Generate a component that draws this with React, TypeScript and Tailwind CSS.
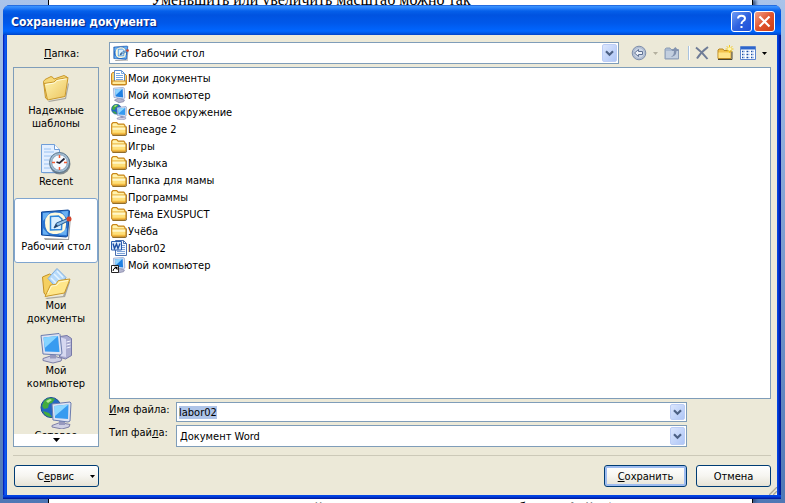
import { useEffect, useRef } from "react";
import type { ReactNode } from "react";

function Folder() {
  return (
    <svg width="16" height="16" viewBox="0 0 16 16" aria-hidden="true">
      <path d="M1.500 14.500h13l1.300-1V5.500" fill="none" stroke="#5d5438" strokeWidth="1" />
      <path
        d="M.7 12.500V3L2 1.600h3.700L7.200 3.200h5.600l1.100 1.200v.9l1.100.9v6.300L13.800 13.800H2z"
        fill="#ffe07a"
        stroke="#c8861a"
        strokeWidth="1.200"
      />
      <path d="M1.700 4V3.200l.7-.6h3l1.400 1.600h5.600l.5.500v.6h-11z" fill="#fff3b0" />
      <path d="M1.400 6h12.800" stroke="#dca53a" strokeWidth=".8" />
      <path d="M1.500 6.600h12.700v2.200H1.500z" fill="#fff7c8" />
      <path d="M1.700 11.700h12.400v1.200H2z" fill="#f3bb42" />
    </svg>
  );
}

function BigFolder() {
  return (
    <svg width="32" height="32" viewBox="0 0 32 32" aria-hidden="true">
      <defs>
        <linearGradient id="bf" x1="0" y1="0" x2="1" y2="1">
          <stop offset="0" stopColor="#fff6b4" />
          <stop offset="1" stopColor="#ecc35c" />
        </linearGradient>
      </defs>
      <path d="M8 29l17-3 3-15 1 1-3 15-17 3z" fill="#666" opacity=".5" />
      <path d="M3.500 9.500l1.500-2 6-3 2 1 1 1.500 10-3.500 3 1.500v4L7 27l-1.500-1z" fill="#f6d877" stroke="#c9982c" />
      <path d="M4 11.500l10-1.500 2.500-2.500L28 5.500 25 24.500 7.500 28z" fill="url(#bf)" stroke="#c9982c" />
      <path d="M5.500 12.500l9-1.500 2.500-2.500 9.500-1.700" fill="none" stroke="#fffbe0" />
    </svg>
  );
}

function BigRecent() {
  return (
    <svg width="32" height="32" viewBox="0 0 32 32" aria-hidden="true">
      <path d="M3 30.500h17V8l-4-5" fill="#8b9bb0" opacity=".5" />
      <path d="M1.500 1.500h13l5 5v23h-18z" fill="#e3efff" stroke="#6f9ed8" />
      <path d="M14.500 1.500v5h5" fill="#fff" stroke="#6f9ed8" />
      <path d="M4 6h7M4 9h10M4 13h8M4 17h5M4 21h5M4 25h6" stroke="#99c2f2" />
      <circle cx="20" cy="21" r="10.500" fill="#485868" opacity=".65" />
      <circle cx="19.500" cy="19.500" r="10" fill="#a9c0d4" stroke="#55738c" />
      <circle cx="19.500" cy="19.500" r="7.800" fill="#f7fbff" stroke="#86a4bd" />
      <path d="M19.500 12v3m0 9v3M12 19.500h3m9 0h3" stroke="#f05a33" strokeWidth="1.500" />
      <path d="M24.500 15.500l-5 4.500-3-1" fill="none" stroke="#223" strokeWidth="1.700" />
    </svg>
  );
}

function Desktop({ size = 32 }: { size?: number }) {
  return (
    <svg width={size} height={size} viewBox="0 0 32 32" aria-hidden="true">
      <path d="M4 30l24 1 2-23 1 1-2 23H5z" fill="#444" opacity=".5" />
      <path d="M1.500 4l27-2 1 1-2 25-1 1-25-2z" fill="#2a74d0" stroke="#0f4797" />
      <path d="M3 5l7-.5L3 13zM21 3.500l7-.5-.5 8zM3 20l6 7-6-.5zM27 20l-.5 7-8-.5z" fill="#69b0f2" />
      <path d="M5 15q0-10 10-10.500l5 .5q6 2 6 9v3q0 8-9 9h-4q-8-1-8-11z" fill="#fffadd" />
      <path d="M10.500 8.500l8-.5 3.500 3-.5 10.500-11 .5z" fill="#d9efff" stroke="#2d86dc" strokeWidth="1.500" />
      <path d="M14 20l2.500-5 11-4.500 1.500 2-10 5z" fill="#8bbde8" stroke="#245a91" />
      <path d="M14 20l2-4 2 2z" fill="#253e60" />
      <circle cx="29" cy="11" r="2.500" fill="#d6432a" />
    </svg>
  );
}

function BigDocs() {
  return (
    <svg width="32" height="32" viewBox="0 0 32 32" aria-hidden="true">
      <path d="M5 31l18-2 6-15 1 1-5 15-18 2z" fill="#666" opacity=".5" />
      <path d="M2.500 10l7-3 3 2 9-1 4 3v13l-19 5-2.500-3z" fill="#f5cf60" stroke="#c49325" />
      <path d="M17 1.500l9 9-9 11-9-10z" fill="#b5d9fa" stroke="#7faee0" />
      <path d="M17 4l6 6.500M14 7l7 7M11 11l6 6" stroke="#e4f4ff" strokeWidth="1.500" />
      <path d="M5 29.500L10.500 18l5-.500 3-4 11.500-1.500-5.500 14z" fill="#ffe78a" stroke="#c9982c" />
      <path d="M8 26l3.500-7 5-.500 3-3.500 8.500-1.500" fill="none" stroke="#fffbd6" />
    </svg>
  );
}

function Computer({ size = 32 }: { size?: number }) {
  return (
    <svg width={size} height={size} viewBox="0 0 32 32" aria-hidden="true">
      <path d="M20 4.500l7-1 4.500 3v17l-6 3.500-6-2z" fill="#a9abd0" stroke="#7779a8" />
      <path d="M21 5.500l5 1.500v18l-5-1z" fill="#d6d8f0" />
      <path d="M26.500 10l4-1m-4 4l4-1m-4 4l4-1" stroke="#f4f5ff" />
      <path d="M3 26.500l9-3 10 3-1 2.500-8 2-10-2.500z" fill="#cfd0e4" stroke="#7d7fa6" />
      <path d="M10 21h6v5.500h-6z" fill="#9799be" />
      <path d="M1 3.500l18-2 1 1 2 19-2 1.500L3 22z" fill="#dde2f2" stroke="#6b7cae" />
      <path d="M3.500 5.500L18 4l1.500 16L5 19.500z" fill="#379bf0" />
      <path d="M3.500 5.500L18 4 4.800 16z" fill="#86d4ff" />
    </svg>
  );
}

function Network({ size = 32 }: { size?: number }) {
  return (
    <svg width={size} height={size} viewBox="0 0 32 32" aria-hidden="true">
      <circle cx="11" cy="10.500" r="10" fill="#2368c4" stroke="#1d4d91" />
      <path d="M4 4q5-5 11-2l-3 4-3 1-1 4-4 1-2-3zM3 14l6 2 3 4q-7 0-9-6z" fill="#44ac3c" />
      <path d="M6 4l4-2 2 1-4 3z" fill="#b5ec90" />
      <path d="M12 28.500l8-3 10 2-1 2.500-7 2-10-2z" fill="#cfd0e4" stroke="#7d7fa6" />
      <path d="M19 23h6v5h-6z" fill="#9799be" />
      <path d="M12 7l18-2 1 1-1 18-2 1-15-2z" fill="#dde2f2" stroke="#6b7cae" />
      <path d="M14.500 9l14-1.500L28 22l-13-1z" fill="#379bf0" />
      <path d="M14.500 9l14-1.500L15 19z" fill="#8ed8ff" />
    </svg>
  );
}

function SmallComputer({ shortcut = false }: { shortcut?: boolean }) {
  return (
    <svg width="16" height="16" viewBox="0 0 16 16" aria-hidden="true">
      <path d="M3.500 13.200l4-2.200 6 2-1 1.800-4.500.9z" fill="#b4b6cf" stroke="#73759b" strokeWidth=".6" />
      <path d="M2.500 1.200L12 .5l1.300.7.5 9.800-1.300.8L3 10.500z" fill="#e2e8f7" stroke="#93a5cf" strokeWidth=".8" />
      <path d="M3.800 2.200l7.800-.5.500 8.800-7.500-1z" fill="#1f80e2" />
      <path d="M3.800 2.200l7.800-.5L4.500 8.500z" fill="#8fd3ff" />
      {shortcut && (
        <>
          <path d="M.5 8.500h7v7h-7z" fill="#fff" stroke="#222" />
          <path d="M2 14q0-2.500 2.500-3" fill="none" stroke="#000" />
          <path d="M3 9.700h3.500v3.500z" fill="#000" />
        </>
      )}
    </svg>
  );
}

function SmallDocs() {
  return (
    <svg width="16" height="16" viewBox="0 0 16 16" aria-hidden="true">
      <path d="M.5 14V4l1-1.500H4L5 4h9l1.500 1.500V14l-1 1H1.500z" fill="#f8d672" stroke="#c9862a" />
      <path d="M3.500.5h7l3 3v8h-10z" fill="#fff" stroke="#5f8cc8" />
      <path d="M10.500.5v3h3M5 3.500h4M5 5.500h7M5 7.500h7M5 9.500h7" fill="none" stroke="#74a8e2" />
      <path d="M1 14.500V11h14v3.500z" fill="#ffe99a" stroke="#c8861a" />
    </svg>
  );
}

function WordDoc() {
  return (
    <svg width="16" height="16" viewBox="0 0 16 16" aria-hidden="true">
      <path d="M4.500.5h8l3 3v12h-11z" fill="#f4f8ff" stroke="#4a6fae" />
      <path d="M12.500.5v3h3" fill="none" stroke="#4a6fae" />
      <path d="M11 5.500h3M11 7.500h3M11 9.500h3M6 11.500h8M6 13.500h8" stroke="#7ea3d8" />
      <path d="M.5 1.500h10v8.500H.5z" fill="#dbe8fb" stroke="#2a5caf" />
      <path d="M2 3.500l1.500 5L5.500 4l1.500 4.500 2-5" fill="none" stroke="#1e4fa5" strokeWidth="1.400" />
    </svg>
  );
}

function Chevron() {
  return (
    <svg width="9" height="7" viewBox="0 0 9 7" aria-hidden="true">
      <path d="M1 1.200l3.500 3.500L8 1.200" fill="none" stroke="#4d6185" strokeWidth="2.200" />
    </svg>
  );
}

function Caret({ color = "#000", wide = false }: { color?: string; wide?: boolean }) {
  return (
    <svg width={wide ? 7 : 5} height={wide ? 4 : 3} viewBox="0 0 5 3" preserveAspectRatio="none" aria-hidden="true">
      <path d="M0 0h5L2.500 3z" fill={color} />
    </svg>
  );
}

const arrowBox =
  "flex w-[15px] shrink-0 items-center justify-center rounded-[2px] border border-[#bccdf5] bg-linear-to-br from-[#dbe6fd] to-[#afc6f6]";

const files: { name: string; icon: ReactNode }[] = [
  { name: "Мои документы", icon: <SmallDocs /> },
  { name: "Мой компьютер", icon: <SmallComputer /> },
  { name: "Сетевое окружение", icon: <Network size={16} /> },
  { name: "Lineage 2", icon: <Folder /> },
  { name: "Игры", icon: <Folder /> },
  { name: "Музыка", icon: <Folder /> },
  { name: "Папка для мамы", icon: <Folder /> },
  { name: "Программы", icon: <Folder /> },
  { name: "Тёма EXUSPUCT", icon: <Folder /> },
  { name: "Учёба", icon: <Folder /> },
  { name: "labor02", icon: <WordDoc /> },
  { name: "Мой компьютер", icon: <SmallComputer shortcut /> },
];

const places: { lines: string[]; icon: ReactNode; active?: boolean }[] = [
  { lines: ["Надежные", "шаблоны"], icon: <BigFolder /> },
  { lines: ["Recent"], icon: <BigRecent /> },
  { lines: ["Рабочий стол"], icon: <Desktop />, active: true },
  { lines: ["Мои", "документы"], icon: <BigDocs /> },
  { lines: ["Мой", "компьютер"], icon: <Computer /> },
  { lines: ["Сетевое", "окружение"], icon: <Network /> },
];

function TitleBar() {
  return (
    <header className="flex h-[30px] items-center justify-between rounded-t-[7px] bg-[linear-gradient(#0a45c4_0px,#3d95ff_1px,#2b82fa_3px,#0560ea_6px,#0053e0_10px,#0058ea_18px,#0066ff_26px,#0059e8_28px,#0043c8_30px)] pt-[3px] pr-[6px] pl-[8px]">
      <h1 className="text-[12px] leading-4 font-bold text-white [text-shadow:1px_1px_1px_#0a1f7a]">Сохранение документа</h1>
      <div className="flex gap-[2px]">
        <button
          type="button"
          aria-label="Справка"
          className="flex size-[21px] items-center justify-center rounded-[3px] border border-white bg-linear-to-br from-[#6f9cf5] via-[#2f62e0] to-[#1d4fd8]"
        >
          <svg width="13" height="15" viewBox="0 0 13 15" aria-hidden="true">
            <path d="M3 4.500Q3 1.700 6.500 1.700T10 4.500Q10 6 8.200 7T6.500 10" fill="none" stroke="#fff" strokeWidth="2" />
            <path d="M5.500 12h2v2h-2z" fill="#fff" />
          </svg>
        </button>
        <button
          type="button"
          aria-label="Закрыть"
          className="flex size-[21px] items-center justify-center rounded-[3px] border border-white bg-linear-to-br from-[#f0a088] via-[#e0532c] to-[#cc3d14]"
        >
          <svg width="13" height="13" viewBox="0 0 13 13" aria-hidden="true">
            <path d="M1.500 1.500l10 10m0-10l-10 10" stroke="#fff" strokeWidth="2.200" />
          </svg>
        </button>
      </div>
    </header>
  );
}

function Toolbar() {
  return (
    <div className="flex h-[22px] w-[140px] shrink-0 items-center">
      <button type="button" aria-label="Назад" className="mr-[6px]">
        <svg width="16" height="16" viewBox="0 0 16 16" aria-hidden="true">
          <circle cx="8" cy="8" r="6.800" fill="#b4c1d6" stroke="#7e8eaa" />
          <circle cx="8" cy="8" r="5.300" fill="#ccd6e6" stroke="#a7b4c9" strokeWidth=".7" />
          <path d="M3.500 8l4-3.500v2h4v3h-4v2z" fill="#eef2f8" stroke="#5f7192" />
        </svg>
      </button>
      <button type="button" aria-label="Журнал" className="mr-[6px]">
        <Caret color="#b4b09f" />
      </button>
      <button type="button" aria-label="Вверх" className="mr-[8px]">
        <svg width="16" height="16" viewBox="0 0 16 16" aria-hidden="true">
          <path d="M1 14V4l1.500-1H6l1 1.500h7.500V14z" fill="#a9b9d0" stroke="#8d9db5" />
          <path d="M2 13V6h12v7z" fill="#c3cfdf" />
          <path d="M5 12q5 0 5-6H7.500L11.300 2 15 6h-2.500q0 6-7.500 6z" fill="#8292ae" />
        </svg>
      </button>
      <span className="mr-[4px] h-[14px] w-[2px] border-r border-white bg-[#a9c3e0]" />
      <button type="button" aria-label="Удалить" className="mr-[7px]">
        <svg width="16" height="16" viewBox="0 0 16 16" aria-hidden="true">
          <path d="M2 2.500q6 4.500 11.500 11.500M14 2Q7 7 3 13.500" fill="none" stroke="#6f7c96" strokeWidth="2" />
        </svg>
      </button>
      <button type="button" aria-label="Создать папку" className="mr-[6px]">
        <svg width="17" height="16" viewBox="0 0 17 16" aria-hidden="true">
          <path d="M1 13.500V5l1-1h4l1 1.500h7v8z" fill="#f2c24e" stroke="#b88824" />
          <path d="M1.500 13V7.500h12V13z" fill="#ffe487" />
          <path d="M1 14.500h14v-8" fill="none" stroke="#4a4430" />
          <path d="M12.500 0v8M8.500 4h8M9.700 1.200l5.600 5.600M15.300 1.200L9.700 6.800" stroke="#f4c81c" />
          <circle cx="12.500" cy="4" r="1.800" fill="#fff8b0" />
        </svg>
      </button>
      <button type="button" aria-label="Представления" className="flex items-center gap-[6px]">
        <svg width="16" height="16" viewBox="0 0 16 16" aria-hidden="true">
          <path d="M.5 1.500h15v13H.5z" fill="#fff" stroke="#5c85cf" />
          <path d="M1 2h14v2.500H1z" fill="#2d66cc" />
          <path
            d="M2 6.500h1.500M2 9.500h1.500M2 12.500h1.500M6.500 6.500H8M6.500 9.500H8M6.500 12.500H8M11 6.500h1.500M11 9.500h1.500M11 12.500h1.500"
            stroke="#1f4f9f"
            strokeWidth="1.600"
          />
          <path
            d="M3.500 6.500H5M3.500 9.500H5M3.500 12.500H5M8 6.500h1.500M8 9.500h1.500M8 12.500h1.500M12.500 6.500H14M12.500 9.500H14M12.500 12.500H14"
            stroke="#9dbcf0"
            strokeWidth="1.600"
          />
        </svg>
        <Caret />
      </button>
    </div>
  );
}

const xpButton =
  "flex items-center rounded-[3px] border border-[#003c74] bg-linear-to-b from-white via-[#f6f5f0] to-[#e6e3d6]";

export default function App() {
  const nameRef = useRef<HTMLInputElement>(null);
  useEffect(() => {
    nameRef.current?.focus();
    nameRef.current?.select();
  }, []);

  return (
    <div className="relative flex h-screen flex-col overflow-hidden bg-linear-to-b from-[#a9c3ea] to-[#4f77b5] font-['DejaVu_Sans_Condensed','DejaVu_Sans',sans-serif] text-[11px] leading-[13px] text-black">
      <div className="absolute inset-y-0 right-[32px] left-[48px] flex flex-col justify-between border-x border-black bg-white font-['Liberation_Serif',serif] text-[16px] leading-[18px] whitespace-nowrap shadow-[3px_0_3px_#3b5784]">
        <p className="-mt-[9px] pl-[102px]">Уменьшить или увеличить масштаб можно так</p>
        <p className="-mb-[15px] pl-[122px]">4. Для создания новой папки нажмите кнопку и выберите файл (</p>
      </div>

      <main className="relative mt-[5px] mr-[4px] ml-[3px] flex flex-col rounded-t-[7px] bg-[linear-gradient(90deg,#0019a0_0px,#0831d9_1px,#1660f0_2px,#0048e0_4px,#0048e0_calc(100%-4px),#0540e0_calc(100%-3px),#0026b8_calc(100%-2px),#00138c_100%)]">
        <TitleBar />
        <div className="mx-[4px] flex flex-col bg-[#ece9d8] px-[6px] pt-[7px]">
          <div className="flex items-center">
            <label htmlFor="folder" className="w-[96px] pl-[31px]">
              <u>П</u>апка:
            </label>
            <div className="flex h-[22px] min-w-0 flex-1 items-stretch border border-[#7f9db9] bg-white p-px">
              <span className="mx-[2px] flex items-center">
                <Desktop size={16} />
              </span>
              <select id="folder" className="min-w-0 flex-1 appearance-none bg-white pl-[4px] outline-none">
                <option>Рабочий стол</option>
              </select>
              <span className={arrowBox}>
                <Chevron />
              </span>
            </div>
            <div className="pl-[12px]">
              <Toolbar />
            </div>
          </div>

          <div className="mt-[3px] flex gap-[10px]">
            <nav aria-label="Папки" className="flex h-[380px] w-[86px] shrink-0 flex-col border border-[#7f9db9]">
              <div className="min-h-0 flex-1 overflow-hidden">
                {places.map((p) => (
                  <button
                    key={p.lines.join(" ")}
                    type="button"
                    className={
                      p.active
                        ? "flex h-[65px] w-full flex-col items-center justify-center rounded-[3px] border border-[#7fa5cf] bg-white"
                        : "flex h-[65px] w-full flex-col items-center justify-center"
                    }
                  >
                    {p.icon}
                    {p.lines.map((l) => (
                      <span key={l} className="whitespace-nowrap">
                        {l}
                      </span>
                    ))}
                  </button>
                ))}
              </div>
              <button type="button" aria-label="Прокрутить вниз" className="flex h-[12px] items-center justify-center bg-white">
                <Caret wide />
              </button>
            </nav>

            <div className="flex min-w-0 flex-1 flex-col">
              <ul aria-label="Файлы" className="h-[332px] border border-[#7f9db9] bg-white py-px pl-px">
                {files.map((f, i) => (
                  <li key={i} className="flex h-[17px] items-center gap-px">
                    {f.icon}
                    <span className="self-end leading-[15px]">{f.name}</span>
                  </li>
                ))}
              </ul>
              <div className="mt-[3px] mr-[84px] flex items-start">
                <label htmlFor="name" className="w-[67px] shrink-0 leading-[15px]">
                  <u>И</u>мя файла:
                </label>
                <div className="flex h-[20px] min-w-0 flex-1 border border-[#7f9db9] bg-white p-px">
                  <input
                    id="name"
                    ref={nameRef}
                    type="text"
                    defaultValue="labor02"
                    className="min-w-0 flex-1 pl-px outline-none selection:bg-[#aec4e8] selection:text-black"
                  />
                  <button type="button" aria-label="Показать имена" className={arrowBox}>
                    <Chevron />
                  </button>
                </div>
              </div>
              <div className="mt-[3px] mr-[84px] flex items-start">
                <label htmlFor="type" className="w-[67px] shrink-0 leading-[15px]">
                  Тип фай<u>л</u>а:
                </label>
                <div className="flex h-[22px] min-w-0 flex-1 border border-[#7f9db9] bg-white p-px">
                  <select id="type" className="min-w-0 flex-1 appearance-none bg-white pl-[2px] outline-none">
                    <option>Документ Word</option>
                  </select>
                  <span className={arrowBox}>
                    <Chevron />
                  </span>
                </div>
              </div>
            </div>
          </div>

          <hr className="mt-[8px] border-t border-[#ccc9b8]" />
          <footer className="flex h-[39px] items-center pt-px">
            <button type="button" className={`${xpButton} ml-px h-[22px] w-[85px] justify-between pr-[3px] pl-[22px]`}>
              <span>
                С<u>е</u>рвис
              </span>
              <Caret />
            </button>
            <span className="flex-1" />
            <button
              type="button"
              className={`${xpButton} mr-[9px] h-[22px] w-[83px] justify-center shadow-[inset_0_0_0_2px_#9ebcf0]`}
            >
              <span>
                <u>С</u>охранить
              </span>
            </button>
            <button type="button" className={`${xpButton} h-[22px] w-[75px] justify-center`}>
              Отмена
            </button>
          </footer>
        </div>
        <svg className="absolute right-[4px] bottom-[4px]" width="10" height="10" viewBox="0 0 10 10" aria-hidden="true">
          <path d="M1 10L10 1M5 10l5-5M9 10l1-1" stroke="#fff" strokeWidth="1" />
          <path d="M2 10l8-8M6 10l4-4" stroke="#aaa692" strokeWidth="1.500" />
        </svg>
        <div className="h-[4px] bg-[linear-gradient(#0540e0,#0048e8_1px,#0026b8_3px,#00138c)]" />
      </main>
    </div>
  );
}
